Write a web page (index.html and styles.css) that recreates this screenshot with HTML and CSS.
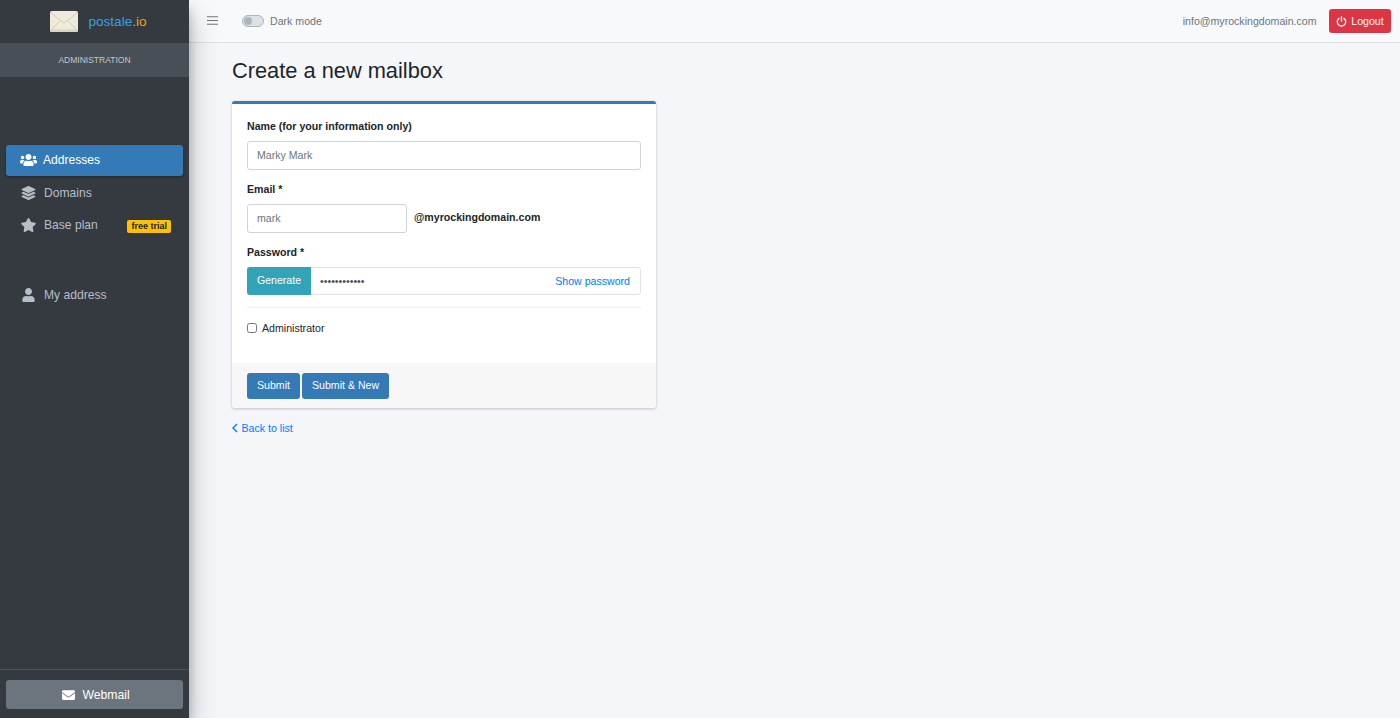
FILE: index.html
```html
<!DOCTYPE html>
<html lang="en">
<head>
<meta charset="utf-8">
<title>Create a new mailbox</title>
<link rel="stylesheet" href="styles.css">
</head>
<body>
<aside class="sidebar">
  <div class="brand">
    <svg class="brand-logo" viewBox="0 0 28 21"><rect width="28" height="21" rx="2" fill="#eeecd8"/><rect y="18.5" width="28" height="2.5" rx="1.2" fill="#d8d6c0"/><path d="M1 2 14 12 27 2M1 19 10.5 9.5M27 19 17.5 9.5" fill="none" stroke="#d0ceb6" stroke-width="1"/></svg>
    <span class="brand-name">postale<span class="brand-tld">.io</span></span>
  </div>
  <div class="role">ADMINISTRATION</div>
  <nav class="nav">
    <a class="nav-item active"><svg class="nav-icon" viewBox="0 0 640 512"><path d="M96 224c35.3 0 64-28.7 64-64s-28.7-64-64-64-64 28.7-64 64 28.7 64 64 64zm448 0c35.3 0 64-28.7 64-64s-28.7-64-64-64-64 28.7-64 64 28.7 64 64 64zm32 32h-64c-17.6 0-33.5 7.1-45.1 18.6 40.3 22.1 68.9 62 75.1 109.4h66c17.7 0 32-14.3 32-32v-32c0-35.3-28.7-64-64-64zm-256 0c61.9 0 112-50.1 112-112S381.9 32 320 32 208 82.1 208 144s50.1 112 112 112zm76.8 32h-8.3c-20.8 10-43.9 16-68.5 16s-47.6-6-68.5-16h-8.3C179.6 288 128 339.6 128 403.2V432c0 26.5 21.5 48 48 48h288c26.5 0 48-21.5 48-48v-28.8c0-63.6-51.6-115.2-115.2-115.2zm-223.7-13.4C161.5 263.1 145.6 256 128 256H64c-35.3 0-64 28.7-64 64v32c0 17.7 14.3 32 32 32h65.9c6.3-47.4 34.9-87.3 75.2-109.4z"/></svg>Addresses</a>
    <a class="nav-item"><svg class="nav-icon" viewBox="0 0 512 512"><path d="M12.41 148.02l232.94 105.67c6.8 3.09 14.49 3.09 21.29 0l232.94-105.67c16.55-7.51 16.55-32.52 0-40.03L266.65 2.31a25.607 25.607 0 0 0-21.29 0L12.41 107.98c-16.55 7.51-16.55 32.53 0 40.04zm487.18 88.28l-58.09-26.33-161.64 73.27c-7.56 3.43-15.59 5.17-23.86 5.17s-16.29-1.74-23.86-5.17L70.51 209.97l-58.1 26.33c-16.55 7.5-16.55 32.5 0 40l232.94 105.59c6.8 3.08 14.49 3.08 21.29 0L499.59 276.3c16.55-7.5 16.55-32.5 0-40zm0 127.8l-57.87-26.23-161.86 73.37c-7.56 3.43-15.59 5.17-23.86 5.17s-16.29-1.74-23.86-5.17L70.29 337.87 12.41 364.1c-16.55 7.5-16.55 32.5 0 40l232.94 105.59c6.8 3.08 14.49 3.08 21.29 0L499.59 404.1c16.55-7.5 16.55-32.5 0-40z"/></svg>Domains</a>
    <a class="nav-item"><svg class="nav-icon" viewBox="0 0 576 512"><path d="M259.3 17.8L194 150.2 47.9 171.5c-26.2 3.8-36.7 36.1-17.7 54.6l105.7 103-25 145.5c-4.5 26.3 23.2 46 46.4 33.7L288 439.6l130.7 68.7c23.2 12.2 50.9-7.4 46.4-33.7l-25-145.5 105.7-103c19-18.5 8.5-50.8-17.7-54.6L382 150.2 316.7 17.8c-11.7-23.6-45.6-23.9-57.4 0z"/></svg>Base plan<span class="badge">free trial</span></a>
    <a class="nav-item nav-item-own"><svg class="nav-icon" viewBox="0 0 448 512"><path d="M224 256c70.7 0 128-57.3 128-128S294.7 0 224 0 96 57.3 96 128s57.3 128 128 128zm89.6 32h-16.7c-22.2 10.2-46.9 16-72.9 16s-50.6-5.8-72.9-16h-16.7C60.2 288 0 348.2 0 422.4V464c0 26.5 21.5 48 48 48h352c26.5 0 48-21.5 48-48v-41.6c0-74.2-60.2-134.4-134.4-134.4z"/></svg>My address</a>
  </nav>
  <div class="sidebar-foot">
    <a class="webmail"><svg class="webmail-icon" viewBox="0 0 512 512"><path d="M502.3 190.8c3.9-3.1 9.7-.2 9.7 4.7V400c0 26.5-21.5 48-48 48H48c-26.5 0-48-21.5-48-48V195.6c0-5 5.7-7.8 9.7-4.7 22.4 17.4 52.1 39.5 154.1 113.6 21.1 15.4 56.7 47.8 92.2 47.6 35.7.3 72-32.8 92.3-47.6 102-74.1 131.6-96.3 154-113.7zM256 320c23.2.4 56.6-29.2 73.4-41.4 132.7-96.3 142.8-104.7 173.4-128.7 5.8-4.5 9.2-11.5 9.2-18.9v-19c0-26.5-21.5-48-48-48H48C21.5 64 0 85.5 0 112v19c0 7.4 3.4 14.3 9.2 18.9 30.6 23.9 40.7 32.4 173.4 128.7 16.8 12.2 50.2 41.8 73.4 41.4z"/></svg>Webmail</a>
  </div>
</aside>
<div class="page">
  <header class="topbar">
    <svg class="burger" viewBox="0 0 11 9"><path d="M0 .75h11M0 4.5h11M0 8.25h11" stroke="#6c757d" stroke-width="1.1" fill="none"/></svg>
    <span class="switch"><span class="knob"></span></span>
    <span class="switch-label">Dark mode</span>
    <span class="user-mail">info@myrockingdomain.com</span>
    <a class="logout"><svg class="power" viewBox="0 0 12 12"><path d="M3.3 2.6a4.6 4.6 0 1 0 5.4 0M6 .8v5" fill="none" stroke="#fff" stroke-width="1.5" stroke-linecap="round"/></svg>Logout</a>
  </header>
  <main class="content">
    <h1 class="title">Create a new mailbox</h1>
    <form class="card">
      <div class="card-body">
        <label class="field-label">Name (for your information only)</label>
        <input class="input input-full" type="text" value="Marky Mark">
        <label class="field-label">Email *</label>
        <div class="email-row">
          <input class="input input-email" type="text" value="mark">
          <span class="domain">@myrockingdomain.com</span>
        </div>
        <label class="field-label">Password *</label>
        <div class="password-row">
          <button class="generate" type="button">Generate</button>
          <input class="password" type="password" value="abcdefghijkl">
          <a class="show-password">Show password</a>
        </div>
        <hr class="divider">
        <label class="check"><input class="checkbox" type="checkbox">Administrator</label>
      </div>
      <div class="card-foot">
        <button class="btn" type="button">Submit</button>
        <button class="btn" type="button">Submit &amp; New</button>
      </div>
    </form>
    <a class="back"><svg class="back-icon" viewBox="0 0 6 10"><path d="M5 1 1 5l4 4" fill="none" stroke="#007bff" stroke-width="1.4"/></svg>Back to list</a>
  </main>
</div>
</body>
</html>
```
FILE: styles.css
```css
* { box-sizing: border-box; }
html, body { height: 100%; }
body {
  margin: 0;
  display: flex;
  height: 718px;
  overflow: hidden;
  font-family: "Liberation Sans", Arial, sans-serif;
  background: #f4f6f9;
  color: #212529;
}
.sidebar {
  width: 189px;
  flex: none;
  display: flex;
  flex-direction: column;
  background: #343a40;
  box-shadow: 0 14px 28px rgba(0,0,0,.25), 0 10px 10px rgba(0,0,0,.22);
  position: relative;
  z-index: 2;
}
.brand {
  height: 43px;
  display: flex;
  align-items: center;
  justify-content: center;
  gap: 10px;
  flex: none;
  padding-left: 8px;
}
.brand-logo { width: 28px; height: 21px; }
.brand-name { font-size: 13.6px; color: #36a3e0; }
.brand-tld { color: #f0a30f; }
.role {
  height: 34px;
  flex: none;
  display: flex;
  align-items: center;
  justify-content: center;
  background: #484f56;
  color: #c2c7d0;
  font-size: 8.5px;
}
.nav {
  flex: 1;
  display: flex;
  flex-direction: column;
  padding: 68px 6px 0;
}
.nav-item {
  height: 30.5px;
  margin-bottom: 2px;
  display: flex;
  align-items: center;
  padding-left: 14px;
  border-radius: 3px;
  color: #b8bec8;
  font-size: 12.1px;
  fill: #b8bec8;
}
.nav-item.active {
  background: #337ab7;
  color: #fff;
  fill: #fff;
  box-shadow: 0 1px 3px rgba(0,0,0,.3);
}
.nav-item.active .nav-icon { margin-right: 6px; }
.nav-item-own { margin-top: 37px; }
.nav-icon { width: 17px; height: 14px; margin-right: 7px; flex: none; }
.badge {
  margin: 2px 12px 0 auto;
  background: #ffc107;
  color: #212529;
  font-size: 9px;
  font-weight: 700;
  line-height: 13px;
  padding: 0 4px;
  border-radius: 2px;
}
.sidebar-foot {
  flex: none;
  height: 49px;
  border-top: 1px solid #4b545c;
  padding: 10px 6px 0;
}
.webmail {
  height: 29px;
  display: flex;
  align-items: center;
  justify-content: center;
  padding-left: 3px;
  background: #6c757d;
  color: #fff;
  font-size: 12.2px;
  border-radius: 3px;
}
.webmail-icon { width: 13px; height: 14px; margin-right: 7px; fill: #fff; }
.page { flex: 1; min-width: 0; display: flex; flex-direction: column; }
.topbar {
  height: 43px;
  flex: none;
  display: flex;
  align-items: center;
  padding: 0 9px 1px 18px;
  background: #f8f9fa;
  border-bottom: 1px solid #dee2e6;
  font-size: 10.6px;
}
.burger { width: 11px; height: 9px; margin-right: 24px; }
.switch {
  width: 22px;
  height: 12px;
  border-radius: 6px;
  background: #dee2e6;
  border: 1px solid #adb5bd;
  display: flex;
  align-items: center;
  padding-left: 1px;
  margin-right: 6px;
}
.knob { width: 8px; height: 8px; border-radius: 50%; background: #adb5bd; }
.switch-label { color: #6c757d; }
.user-mail { margin-left: auto; color: #6c757d; margin-right: 12.5px; }
.logout {
  width: 62px;
  height: 24px;
  display: flex;
  align-items: center;
  justify-content: center;
  background: #dc3545;
  color: #fff;
  border-radius: 3px;
  margin-top: 1px;
}
.power { width: 11px; height: 11px; margin-right: 4px; }
.content { padding: 0 0 0 43px; }
.title {
  margin: 14px 0 17px;
  font-size: 21.8px;
  line-height: 27px;
  font-weight: 400;
}
.card {
  width: 424px;
  background: #fff;
  border-top: 3px solid #337ab7;
  border-radius: 3px;
  box-shadow: 0 0 1px rgba(0,0,0,.13), 0 1px 3px rgba(0,0,0,.2);
  overflow: hidden;
}
.card-body { padding: 15px 15px 0; height: 259px; }
.field-label {
  display: block;
  font-size: 10.6px;
  font-weight: 700;
  line-height: 14px;
  margin-bottom: 8px;
}
.input {
  display: block;
  height: 29px;
  padding: 0 9px 1px;
  border: 1px solid #ced4da;
  border-radius: 3px;
  font: 10.6px "Liberation Sans", Arial, sans-serif;
  color: #6c757d;
  background: #fff;
}
.input-full { width: 394px; margin-bottom: 12px; }
.email-row { display: flex; align-items: center; margin-bottom: 12px; }
.input-email { width: 160px; }
.domain { font-size: 10.6px; font-weight: 700; margin: 0 0 3px 7px; }
.password-row {
  display: flex;
  align-items: center;
  width: 394px;
  height: 28px;
  border: 1px solid #dfe3e7;
  border-radius: 3px;
  font-size: 10.6px;
}
.generate {
  width: 64px;
  height: 28px;
  margin: -1px 0 -1px -1px;
  padding: 0 0 2px;
  border: 0;
  border-radius: 3px 0 0 3px;
  background: #33a4b8;
  color: #fff;
  font: 10.6px "Liberation Sans", Arial, sans-serif;
}
.password {
  flex: 1;
  min-width: 0;
  border: 0;
  padding: 0 9px;
  height: 26px;
  background: transparent;
  color: #495057;
  font: 10.6px "Liberation Sans", Arial, sans-serif;
}
.show-password { color: #007bff; margin-right: 10px; }
.divider { border: 0; border-top: 1px solid #eee; margin: 12px 0 12.5px; }
.check { display: flex; align-items: center; font-size: 10.6px; height: 15px; color: #212529; }
.checkbox { width: 10px; height: 10px; margin: 0 5px 0 0; }
.card-foot {
  height: 45px;
  padding: 10px 15px 0;
  background: #f7f7f7;
  display: flex;
  gap: 2px;
  align-items: flex-start;
}
.btn {
  height: 26px;
  padding: 0 10px 2px;
  border: 0;
  border-radius: 3px;
  background: #337ab7;
  color: #fff;
  font: 10.6px "Liberation Sans", Arial, sans-serif;
}
.back {
  display: inline-flex;
  align-items: center;
  margin-top: 14px;
  color: #007bff;
  font-size: 10.6px;
}
.back-icon { width: 6px; height: 10px; margin-right: 3.5px; }
```
